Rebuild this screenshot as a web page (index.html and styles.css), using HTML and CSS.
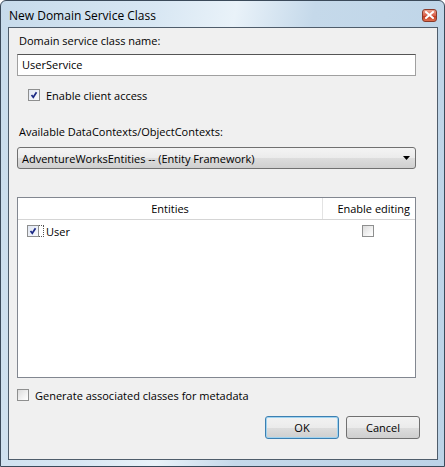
FILE: index.html
```html
<!DOCTYPE html>
<html>
<head>
<meta charset="utf-8">
<link rel="stylesheet" href="styles.css">
</head>
<body>
<div class="window">
  <div class="titlebar">
    <span class="title">New Domain Service Class</span>
    <span class="close"><svg width="9" height="8" viewBox="0 0 9 8"><path d="M1 1 L8 7 M8 1 L1 7" stroke="#fff" stroke-width="2" stroke-linecap="square"/></svg></span>
  </div>
  <div class="client">
    <div class="label first">Domain service class name:</div>
    <div class="textbox">UserService</div>
    <label class="check indent"><span class="cb checked"><svg width="8" height="8" viewBox="0 0 8 8"><path d="M1.5 4 L3.3 6.3 L6.5 1.3" stroke="#1c2a86" stroke-width="1.7" fill="none"/></svg></span>Enable client access</label>
    <div class="label second">Available DataContexts/ObjectContexts:</div>
    <div class="combo"><span>AdventureWorksEntities -- (Entity Framework)</span><svg width="7" height="4" viewBox="0 0 7 4"><path d="M0 0 H7 L3.5 4 Z" fill="#000"/></svg></div>
    <div class="list">
      <div class="header">
        <div class="col-ent">Entities</div>
        <div class="col-edit">Enable editing</div>
      </div>
      <div class="row">
        <div class="col-ent cell-ent"><span class="focus"><span class="cb checked"><svg width="8" height="8" viewBox="0 0 8 8"><path d="M1.5 4 L3.3 6.3 L6.5 1.3" stroke="#1c2a86" stroke-width="1.7" fill="none"/></svg></span><span class="dots"></span></span>User</div>
        <div class="col-edit cell-edit"><span class="cb"></span></div>
      </div>
    </div>
    <label class="check meta"><span class="cb"></span>Generate associated classes for metadata</label>
    <div class="buttons">
      <button class="btn default">OK</button>
      <button class="btn">Cancel</button>
    </div>
  </div>
</div>
</body>
</html>
```
FILE: styles.css
```css
* { box-sizing: border-box; }
html, body { margin: 0; padding: 0; }
body {
  width: 445px; height: 467px; overflow: hidden;
  font-family: "Open Sans", "Noto Sans", sans-serif;
  font-size: 11px; color: #000;
}
.window {
  width: 445px; height: 467px;
  border: 1px solid #3b4a5a;
  border-radius: 6px 6px 0 0;
  background: linear-gradient(100deg, #c7dbeb 0%, #d8e7f3 30%, #e9f2f9 45%, #c5d9ea 60%, #bcd3e7 100%);
  display: flex; flex-direction: column;
}
.titlebar {
  height: 26px;
  display: flex; align-items: center; justify-content: space-between;
  padding: 0 7px 0 8px;
}
.title { font-size: 12px; color: #000; margin-top: 2px; }
.close {
  width: 15px; height: 13px;
  border: 1px solid #8a3a2a; border-radius: 3px;
  background: linear-gradient(#eea08c 0%, #d8604a 50%, #c03a20 55%, #e07050 100%);
  display: flex; align-items: center; justify-content: center;
  margin-top: 2px;
}
.client {
  margin: 0 6px 6px 7px;
  height: 433px;
  border: 1px solid #4f5d6b;
  background: #f0f0f0;
  padding: 0 21px 0 8px;
  display: flex; flex-direction: column;
}
.label { height: 16px; line-height: 16px; padding-left: 2px; }
.label.first { margin-top: 5px; }
.textbox {
  margin-top: 5px;
  height: 22px;
  background: #fff;
  border: 1px solid #a0a0a0; border-top-color: #555;
  padding-left: 4px; line-height: 19px;
  font-size: 11px;
}
.check { display: flex; align-items: center; height: 16px; }
.check.indent { margin-top: 11px; padding-left: 11px; }
.cb {
  width: 12px; height: 12px;
  border: 1px solid #8e8f8f;
  background: linear-gradient(135deg, #dcdcdc, #f6f6f6 70%, #fff);
  display: inline-flex; align-items: center; justify-content: center;
  margin-right: 6px; flex: none;
}
.cb.checked { background: linear-gradient(135deg, #e2e8f4, #f8f9fc); }
.label.second { margin-top: 21px; }
.combo {
  margin-top: 7px;
  height: 22px;
  border: 1px solid #707070; border-radius: 3px;
  background: linear-gradient(#f4f4f4 0%, #ebebeb 50%, #dddddd 51%, #cfcfcf 100%);
  display: flex; align-items: center; justify-content: space-between;
  padding: 0 5px 0 4px;
}
.list {
  margin-top: 28px;
  height: 181px;
  border: 1px solid #828790;
  background: #fff;
}
.header {
  display: flex; height: 22px;
  border-bottom: 1px solid #d5d5d5;
}
.header .col-ent { text-align: center; border-right: 1px solid #e3e3e3; line-height: 21px; }
.header .col-edit { text-align: right; padding-right: 5px; line-height: 21px; }
.col-ent { width: 305px; }
.col-edit { flex: 1; }
.row { display: flex; height: 18px; margin-top: 2px; }
.cell-ent { display: flex; align-items: center; padding-left: 9px; }
.focus { display: inline-flex; align-items: center; }
.focus .cb { margin-right: 0; }
.dots { width: 5px; height: 12px; border: 1px dotted #555; border-left: none; margin-right: 2px; }
.cell-edit { display: flex; align-items: center; justify-content: center; padding-right: 3px; }
.cell-edit .cb { margin: 0; }
.check.meta { margin-top: 9px; }
.check.meta .cb { margin-right: 6px; }
.buttons {
  margin-top: 13px;
  display: flex; justify-content: flex-end; gap: 7px;
  margin-right: -4px;
}
.btn {
  width: 74px; height: 23px;
  font-family: inherit; font-size: 11px;
  border: 1px solid #707070; border-radius: 3px;
  background: linear-gradient(#f2f2f2 0%, #ebebeb 50%, #dddddd 51%, #cfcfcf 100%);
  padding: 0; color: #000;
}
.btn.default { border-color: #3c7fb1; box-shadow: inset 0 0 0 1px #9fd3f0; }
```
